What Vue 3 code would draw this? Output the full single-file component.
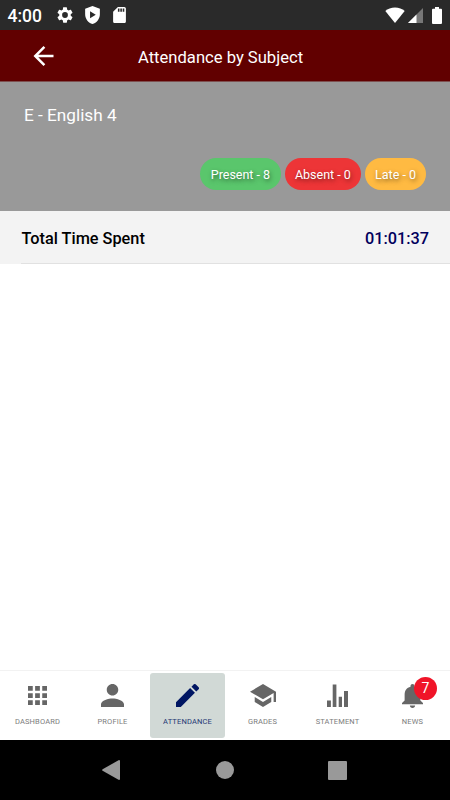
<script setup>
const stats = [
  { label: 'Present - 8', kind: 'present' },
  { label: 'Absent - 0', kind: 'absent' },
  { label: 'Late - 0', kind: 'late' },
]
const tabs = [
  { label: 'DASHBOARD', w: 19, h: 19, box: '4 4 16 16', d: 'M4 4h4v4H4zM10 4h4v4h-4zM16 4h4v4h-4zM4 10h4v4H4zM10 10h4v4h-4zM16 10h4v4h-4zM4 16h4v4H4zM10 16h4v4h-4zM16 16h4v4h-4z' },
  { label: 'PROFILE', w: 23, h: 23, box: '4 4 16 16', d: 'M12 12c2.21 0 4-1.79 4-4s-1.79-4-4-4-4 1.79-4 4 1.79 4 4 4zm0 2c-2.67 0-8 1.34-8 4v2h16v-2c0-2.66-5.33-4-8-4z' },
  { label: 'ATTENDANCE', active: true, w: 23, h: 23, box: '3 3 18 18', d: 'M3 17.25V21h3.75L17.81 9.94l-3.75-3.75L3 17.25zM20.71 7.04a1 1 0 0 0 0-1.41l-2.34-2.34a1 1 0 0 0-1.41 0l-1.83 1.83 3.75 3.75 1.83-1.83z' },
  { label: 'GRADES', w: 26, h: 23, box: '1 3 22 18', d: 'M5 13.18v4L12 21l7-3.82v-4L12 17l-7-3.82zM12 3L1 9l11 6 9-4.91V17h2V9L12 3z' },
  { label: 'STATEMENT', w: 21, h: 23, box: '0 0 21 23', d: 'M0 16.5h3.9V23H0zM5.7 .4h3.7V23H5.7zM11.7 12.8h3.3V23h-3.3zM17 7h4v16h-4z' },
  { label: 'NEWS', badge: 7, w: 21, h: 24, box: '4 2.5 16 19.5', d: 'M12 22c1.1 0 2-.9 2-2h-4c0 1.1.89 2 2 2zm6-6v-5c0-3.07-1.64-5.64-4.5-6.32V4c0-.83-.67-1.5-1.5-1.5s-1.5.67-1.5 1.5v.68C7.63 5.36 6 7.92 6 11v5l-2 2v1h16v-1l-2-2z' },
]
</script>

<template>
  <div class="screen">
    <div class="status">
      <span class="clock">4:00</span>
      <svg class="gear" viewBox="2 2 20 20"><path d="M19.14 12.94c.04-.3.06-.61.06-.94 0-.32-.02-.64-.07-.94l2.03-1.58a.49.49 0 0 0 .12-.61l-1.92-3.32a.488.488 0 0 0-.59-.22l-2.39.96c-.5-.38-1.03-.7-1.62-.94l-.36-2.54a.484.484 0 0 0-.48-.41h-3.84c-.24 0-.43.17-.47.41l-.36 2.54c-.59.24-1.13.57-1.62.94l-2.39-.96c-.22-.08-.47 0-.59.22L2.74 8.87c-.12.21-.08.47.12.61l2.03 1.58c-.05.3-.09.63-.09.94s.02.64.07.94l-2.03 1.58a.49.49 0 0 0-.12.61l1.92 3.32c.12.22.37.29.59.22l2.39-.96c.5.38 1.03.7 1.62.94l.36 2.54c.05.24.24.41.48.41h3.84c.24 0 .44-.17.47-.41l.36-2.54c.59-.24 1.13-.56 1.62-.94l2.39.96c.22.08.47 0 .59-.22l1.92-3.32c.12-.22.07-.47-.12-.61l-2.01-1.58zM12 15.6A3.6 3.6 0 1 1 12 8.4a3.6 3.6 0 0 1 0 7.2z" /></svg>
      <svg class="shield" viewBox="3 1 18 22"><path fill-rule="evenodd" d="M12 1L3 4.5V11c0 5.55 3.84 10.74 9 12 5.16-1.26 9-6.45 9-12V4.5zM9 7.5v8.6l7-4.3z" /></svg>
      <svg class="card" viewBox="4 2 16 20"><path fill-rule="evenodd" d="M18 2h-8L4.02 8 4 20c0 1.1.9 2 2 2h12c1.1 0 2-.9 2-2V4c0-1.1-.9-2-2-2zm-6 6h-2V4h2v4zm3 0h-2V4h2v4zm3 0h-2V4h2v4z" /></svg>
      <span class="fill"></span>
      <svg class="wifi" viewBox="0 0 20 16"><path d="M10 16L.3 4C5-.8 15-.8 19.7 4z" /></svg>
      <svg class="signal" viewBox="0 0 15 15"><path fill="#777" d="M0 15L15 0v15z" /><path d="M0 15l8.5-8.5V15z" /></svg>
      <svg class="battery" viewBox="0 0 10 17"><path d="M3 0h4v1.7h2q1 0 1 1V16q0 1-1 1H1q-1 0-1-1V2.7q0-1 1-1h2z" /></svg>
    </div>

    <header class="header">
      <svg class="back" viewBox="4 4 16 16"><path d="M20 11H7.83l5.59-5.59L12 4l-8 8 8 8 1.41-1.41L7.83 13H20v-2z" /></svg>
      <h1 class="title">Attendance by Subject</h1>
    </header>

    <section class="subject">
      <div class="subject-name">E - English 4</div>
      <div class="stats">
        <span v-for="s in stats" :key="s.kind" class="pill" :class="s.kind">{{ s.label }}</span>
      </div>
    </section>

    <div class="total">
      <div class="total-inner">
        <span>Total Time Spent</span>
        <span class="time">01:01:37</span>
      </div>
    </div>

    <main class="content"></main>

    <nav class="tabs">
      <div v-for="t in tabs" :key="t.label" class="tab" :class="{ active: t.active }">
        <div class="icon">
          <svg :width="t.w" :height="t.h" :viewBox="t.box" preserveAspectRatio="none"><path :d="t.d" /></svg>
          <span v-if="t.badge" class="badge">{{ t.badge }}</span>
        </div>
        <span class="tab-label">{{ t.label }}</span>
      </div>
    </nav>

    <div class="system">
      <svg class="sys-back" viewBox="0 0 18 20"><path d="M17 0q1 0 1 1v18q0 1-1 1L.6 10.8q-.9-.8 0-1.6z" /></svg>
      <span class="sys-home"></span>
      <span class="sys-recent"></span>
    </div>
  </div>
</template>

<style>
body { margin: 0; }
</style>

<style scoped>
.screen {
  width: 450px;
  height: 800px;
  display: flex;
  flex-direction: column;
  background: #fff;
  font-family: Roboto, "Liberation Sans", sans-serif;
  overflow: hidden;
}
svg { display: block; fill: currentColor; flex: none; }
.status {
  height: 30px;
  box-sizing: border-box;
  padding: 0 8px 0 7.5px;
  display: flex;
  align-items: center;
  color: #fff;
  background: #2a2a2a;
}
.clock { width: 49.5px; font-size: 17.5px; line-height: 30px; font-weight: 500; padding-top: 1px; box-sizing: border-box; }
.gear { width: 16px; height: 16px; }
.shield { width: 15px; height: 18px; margin-left: 12px; }
.card { width: 13px; height: 16px; margin-left: 13px; }
.fill { flex: 1; }
.wifi { width: 20px; height: 16px; }
.signal { width: 15px; height: 15px; margin-left: 3px; margin-top: 1px; }
.battery { width: 10px; height: 17px; margin-left: 9px; }
.header {
  height: 52px;
  box-sizing: border-box;
  display: flex;
  align-items: center;
  padding: 1px 0 0 33px;
  color: #fff;
  background: #610000;
  border-bottom: 1px solid #7e5050;
}
.back { width: 21px; height: 20px; }
.title { margin: 0 0 0 84px; padding-top: 3px; font-size: 16.6px; line-height: 20px; font-weight: 400; white-space: nowrap; }
.subject {
  height: 129px;
  box-sizing: border-box;
  padding: 22px 24px 0;
  background: #999;
  color: #fff;
}
.subject-name { font-size: 17.2px; line-height: 23px; }
.stats { display: flex; justify-content: flex-end; gap: 4px; margin-top: 31.3px; }
.pill {
  height: 32px;
  line-height: 33px;
  border-radius: 16px;
  text-align: center;
  font-size: 12.5px;
  text-shadow: 1px 2px 4px rgba(0, 0, 0, .5);
  white-space: nowrap;
}
.present { width: 80.5px; background: #5ac66c; }
.absent { width: 76.3px; background: #ed3537; }
.late { width: 61px; background: #ffba42; }
.total { height: 53px; padding-left: 21px; background: #f3f3f3; }
.total-inner {
  height: 53px;
  box-sizing: border-box;
  padding: 2px 21px 0 .5px;
  border-bottom: 1px solid #e1e1e1;
  display: flex;
  justify-content: space-between;
  align-items: center;
  font-size: 16.3px;
  font-weight: 500;
  color: #000;
}
.time { color: #00005c; }
.content { flex: 1; }
.tabs {
  height: 70px;
  box-sizing: border-box;
  display: grid;
  grid-template-columns: repeat(6, 75px);
  padding: 2px 0;
  border-top: 1px solid #f2f2f2;
}
.tab {
  height: 65px;
  display: flex;
  flex-direction: column;
  align-items: center;
  color: #666;
  border-radius: 3px;
}
.active { background: #d1d9d6; color: #001663; }
.icon { position: relative; height: 27px; margin-top: 9px; display: flex; align-items: center; }
.badge {
  position: absolute;
  left: 12px;
  top: -5px;
  width: 23px;
  height: 23px;
  border-radius: 50%;
  background: #f01428;
  color: #fff;
  font-size: 14px;
  line-height: 23px;
  text-align: center;
}
.tab-label { margin-top: 8px; font-size: 7.5px; line-height: 10px; letter-spacing: .15px; opacity: .85; }
.system {
  height: 60px;
  background: #000;
  display: flex;
  align-items: center;
  color: #999;
  padding-left: 102px;
}
.sys-back { width: 18px; height: 20px; }
.sys-home { width: 18px; height: 18px; margin-left: 96px; border-radius: 50%; background: #999; }
.sys-recent { width: 19px; height: 19px; margin-left: 94px; border-radius: 1px; background: #999; }
</style>
